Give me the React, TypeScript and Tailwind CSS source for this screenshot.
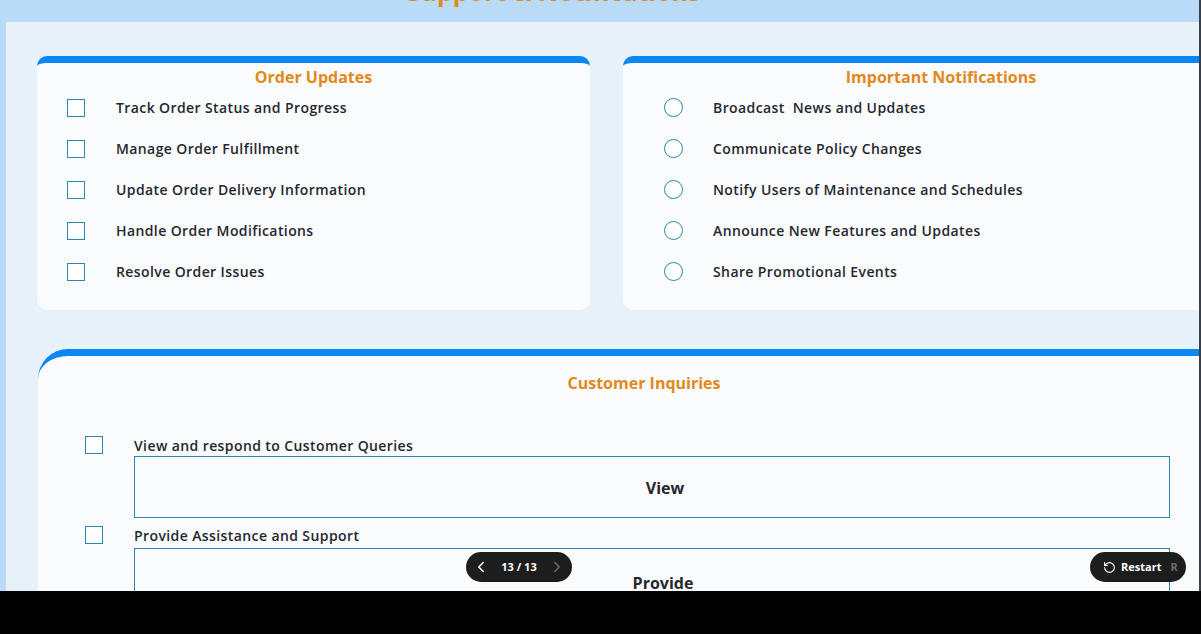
import React from "react";
import { ChevronLeft, ChevronRight, RotateCcw } from "lucide-react";

const font = { fontFamily: "'Open Sans', 'Liberation Sans', sans-serif" };

const orderItems = [
  "Track Order Status and Progress",
  "Manage Order Fulfillment",
  "Update Order Delivery Information",
  "Handle Order Modifications",
  "Resolve Order Issues",
];

const notifItems = [
  "Broadcast\u00a0 News and Updates",
  "Communicate Policy Changes",
  "Notify Users of Maintenance and Schedules",
  "Announce New Features and Updates",
  "Share Promotional Events",
];

function Box() {
  return <div className="w-[18px] h-[18px] shrink-0 border-[1.5px] border-[#2a87ae] bg-white" />;
}
function Radio() {
  return <div className="w-[19px] h-[19px] shrink-0 rounded-full border-[1.5px] border-[#2a87ae] bg-white" />;
}

export default function App() {
  return (
    <div className="relative w-[1201px] h-[634px] overflow-hidden bg-black" style={font}>
      <div className="flex flex-col h-[591px] bg-[#b9dbf8] overflow-hidden">
        <div className="h-[22px] shrink-0 flex justify-center overflow-hidden">
          <div className="ml-[-94px] mt-[-24px] text-[25px] leading-[30px] font-bold text-[#e1891c] whitespace-nowrap">
            Support &amp; Notifications
          </div>
        </div>
        <div className="flex-1 ml-[6px] w-[1193px] bg-[#e7f1fa] overflow-hidden">
          <div className="w-[1300px] pl-[31px] pt-[34px]">
            <div className="flex gap-[33px]">
              <div className="w-[553px] h-[254px] bg-[#f9fbfd] rounded-[10px] border-t-[7px] border-[#0b87f3]">
                <div className="pt-[3px] text-center text-[16px] leading-[22px] font-bold text-[#e1891c]">Order Updates</div>
                <div className="flex flex-col -mt-px">
                  {orderItems.map((t) => (
                    <div key={t} className="h-[41px] flex items-center pl-[30px] gap-[31px]">
                      <Box />
                      <span className="text-[14px] font-semibold tracking-[0.4px] text-[#25282d] whitespace-nowrap">{t}</span>
                    </div>
                  ))}
                </div>
              </div>
              <div className="w-[636px] h-[254px] bg-[#f9fbfd] rounded-[10px] border-t-[7px] border-[#0b87f3]">
                <div className="pt-[3px] text-center text-[16px] leading-[22px] font-bold text-[#e1891c]">Important Notifications</div>
                <div className="flex flex-col -mt-px">
                  {notifItems.map((t) => (
                    <div key={t} className="h-[41px] flex items-center pl-[41px] gap-[30px]">
                      <Radio />
                      <span className="text-[14px] font-semibold tracking-[0.4px] text-[#25282d] whitespace-nowrap">{t}</span>
                    </div>
                  ))}
                </div>
              </div>
            </div>
            <div className="mt-[39px] ml-px w-[1212px] h-[300px] bg-[#f9fbfd] rounded-t-[30px] border-t-[7px] border-[#0b87f3]">
              <div className="pt-[16px] text-center text-[16px] leading-[22px] font-bold text-[#e1891c]">Customer Inquiries</div>
              <div className="pl-[47px]">
                <div className="mt-[41px] h-[20px] flex items-center gap-[31px]">
                  <Box />
                  <span className="text-[14px] font-semibold tracking-[0.4px] text-[#25282d] whitespace-nowrap">View and respond to Customer Queries</span>
                </div>
                <div className="mt-px ml-[49px] w-[1036px] h-[62px] border border-[#2a87ae] flex items-center justify-center pl-[26px] pt-px text-[16px] font-bold text-[#25282d]">
                  View
                </div>
                <div className="mt-[7px] h-[20px] flex items-center gap-[31px]">
                  <Box />
                  <span className="text-[14px] font-semibold tracking-[0.4px] text-[#25282d] whitespace-nowrap">Provide Assistance and Support</span>
                </div>
                <div className="mt-[3px] ml-[49px] w-[1036px] h-[62px] border border-[#2a87ae] flex items-start justify-center pt-[22px] pl-[22px] text-[16px] font-bold text-[#25282d]">
                  Provide
                </div>
              </div>
            </div>
          </div>
        </div>
      </div>
      <div className="absolute top-0 right-0 w-[2px] h-[591px] bg-[#3a3f45]" />

      <div className="absolute left-[466px] top-[552px] w-[106px] h-[30px] rounded-full bg-[#1d1d1d] flex items-center justify-between px-[6px] text-white">
        <ChevronLeft size={18} strokeWidth={2} />
        <span className="text-[11px] font-bold">13 / 13</span>
        <ChevronRight size={18} strokeWidth={2} className="text-[#6a6a6a]" />
      </div>
      <div className="absolute left-[1090px] top-[552px] w-[96px] h-[30px] rounded-full bg-[#1d1d1d] flex items-center pl-[13px] gap-[5px] text-white">
        <RotateCcw size={13} strokeWidth={2} />
        <span className="text-[11px] font-bold">Restart</span>
        <span className="ml-[4px] text-[11px] font-bold text-[#6a6a6a]">R</span>
      </div>
    </div>
  );
}
